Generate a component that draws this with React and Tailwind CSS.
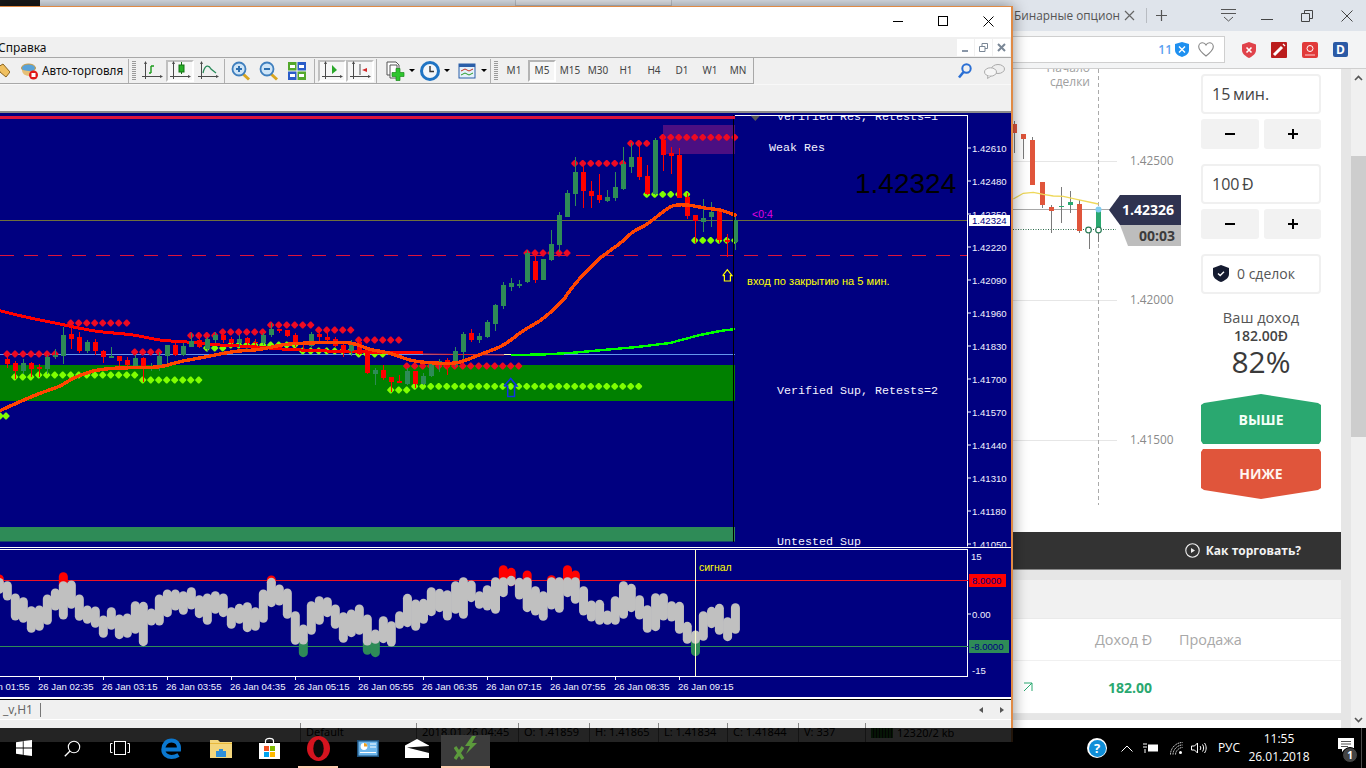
import React from "react";

const SANS = "'Liberation Sans', Arial, sans-serif";
const MONO = "'Liberation Mono', monospace";
const OPEN = "'Open Sans', sans-serif";

// candle rows: [zoomX, colour, bodyTop, bodyBottom, wickTop, wickBottom]
const c7 = [
  [22,"r",178,192,170,205],[46,"r",190,212,182,238],[70,"g",190,212,178,222],[94,"r",190,208,185,230],[118,"r",202,207,192,232],
  [142,"g",172,207,165,222],[166,"g",165,172,148,178],[190,"g",105,168,80,192],[214,"r",102,117,82,147],[238,"r",112,152,96,158],
  [262,"g",127,153,120,158],[286,"r",127,153,118,166],[310,"r",153,172,150,190],[334,"g",168,173,142,174],[358,"r",168,183,168,200],
  [382,"r",180,195,172,208],[406,"g",175,200,165,205],[430,"r",175,205,170,245],[454,"g",201,203,190,212],[478,"g",168,203,155,214],
  [502,"g",136,168,135,190],[526,"r",136,165,130,168],[550,"g",138,165,128,168],[574,"g",123,140,100,142],[598,"r",120,140,100,145],
  [622,"g",118,148,110,155],[646,"g",106,120,96,130],[670,"r",105,120,100,128],[694,"r",118,130,112,134],[718,"g",118,130,105,140],
  [742,"r",114,130,110,136],[766,"r",125,128,118,140],[790,"g",106,130,98,135],[814,"g",87,105,70,110],[838,"r",86,92,86,100],
  [862,"r",90,107,90,110],[886,"r",106,135,100,142],[910,"r",130,135,124,155],[934,"g",102,137,95,140],[958,"r",102,111,95,130],
  [982,"r",111,120,90,125],[1006,"r",118,137,110,140],[1030,"r",135,152,125,170],
];
const c8 = [
  [4,"g",126,152,120,168],[28,"r",125,162,115,165],[52,"r",155,220,150,222],[76,"g",210,222,205,255],[100,"r",210,233,195,240],
  [124,"r",232,245,232,275],[148,"r",243,248,225,250],[172,"g",212,252,205,255],[196,"r",214,252,212,265],[220,"g",228,252,218,255],
  [244,"g",190,228,185,232],[268,"g",184,195,178,215],[292,"r",180,200,175,225],[316,"g",153,195,140,200],[340,"g",102,155,95,190],
  [364,"r",98,120,88,126],[388,"g",108,120,100,130],[412,"g",66,110,60,115],[436,"g",15,72,12,92],[460,"g",-45,18,-55,26],
  [484,"g",-50,-38,-65,-28],[508,"g",-47,-41,-60,-36],[532,"g",-141,-54,-150,-51],[556,"r",-117,-60,-135,-50],
];
const c9 = [
  [10,"g",432,495,432,495],[34,"g",387,435,345,437],[58,"g",300,390,292,410],[82,"g",235,305,225,305],[106,"g",170,238,125,272],
  [130,"r",170,228,152,278],[154,"r",228,243,198,278],[178,"r",240,255,178,265],[202,"g",246,258,225,260],[226,"g",216,248,172,258],
  [250,"g",146,222,97,225],[274,"g",126,156,85,174],[298,"r",125,186,90,196],[322,"r",183,238,150,240],[346,"g",75,236,70,240],
  [370,"r",75,120,60,168],[394,"r",114,122,95,176],[418,"r",120,248,100,250],[442,"r",245,302,235,312],[466,"r",300,317,300,385],
  [490,"g",310,320,252,350],[514,"g",292,305,262,335],[538,"r",285,375,282,385],[562,"r",375,380,357,425],[586,"g",316,380,305,405],
];
const candles = [
  ...c7.map((c) => [c[0] / 3, c[1], 300 + c[2] / 3, 300 + c[3] / 3, 300 + c[4] / 3, 300 + c[5] / 3]),
  ...c8.map((c) => [350 + c[0] / 3, c[1], 300 + c[2] / 3, 300 + c[3] / 3, 300 + c[4] / 3, 300 + c[5] / 3]),
  ...c9.map((c) => [540 + c[0] / 3, c[1], 115 + c[2] / 3, 115 + c[3] / 3, 115 + c[4] / 3, 115 + c[5] / 3]),
];

const range = (from, to, step = 8) => {
  const out = [];
  for (let x = from; x <= to + 0.1; x += step) out.push(x);
  return out;
};
const redDiamonds = [
  ...range(70.7, 126.7).map((x) => [x, 323]),
  ...range(7, 55).map((x) => [x, 354]),
  ...range(134.7, 158.7).map((x) => [x, 352]),
  ...range(190.7, 214.7).map((x) => [x, 335.5]),
  ...range(222.7, 262.7).map((x) => [x, 332]),
  ...range(270.7, 310.7).map((x) => [x, 325]),
  ...range(318.7, 350.7).map((x) => [x, 330]),
  ...range(358.7, 398.7).map((x) => [x, 340]),
  ...range(406.7, 518.7).map((x) => [x, 366]),
  ...range(527, 567).map((x) => [x, 253]),
  ...range(574.7, 622.7).map((x) => [x, 163.3]),
  ...range(630.7, 646.7).map((x) => [x, 143.3]),
  ...range(662.7, 734.7).map((x) => [x, 137.3]),
];
const limeDiamonds = [
  ...range(14.7, 30.7).map((x) => [x, 377]),
  ...range(38.7, 134.7).map((x) => [x, 375]),
  ...range(142.7, 198.7).map((x) => [x, 380]),
  ...range(206.7, 222.7).map((x) => [x, 348]),
  ...range(230.7, 294.7).map((x) => [x, 345]),
  ...range(302.7, 350.7).map((x) => [x, 351]),
  ...range(358.7, 382.7).map((x) => [x, 354]),
  ...range(390.7, 406.7).map((x) => [x, 390]),
  ...range(414.7, 638.7).map((x) => [x, 386.3]),
  ...range(646.7, 686.7).map((x) => [x, 194.3]),
  ...range(694.7, 734.7).map((x) => [x, 240.3]),
  [0, 416], [6, 416],
];
const gem = (x, y) => `${x - 3.4},${y - 0.6} ${x - 0.6},${y - 3.4} ${x + 0.6},${y - 3.4} ${x + 3.4},${y - 0.6} ${x + 3.4},${y + 0.6} ${x + 0.6},${y + 3.4} ${x - 0.6},${y + 3.4} ${x - 3.4},${y + 0.6}`;

const smooth = (p) => {
  let d = `M${p[0][0].toFixed(1)} ${p[0][1].toFixed(1)}`;
  for (let i = 0; i < p.length - 1; i++) {
    const a = p[Math.max(i - 1, 0)];
    const b = p[i];
    const c = p[i + 1];
    const e = p[Math.min(i + 2, p.length - 1)];
    d += ` C${(b[0] + (c[0] - a[0]) / 6).toFixed(1)} ${(b[1] + (c[1] - a[1]) / 6).toFixed(1)} ${(c[0] - (e[0] - b[0]) / 6).toFixed(1)} ${(c[1] - (e[1] - b[1]) / 6).toFixed(1)} ${c[0].toFixed(1)} ${c[1].toFixed(1)}`;
  }
  return d;
};
const orange = smooth([
  ...[[0,332],[60,305],[120,280],[180,258],[220,235],[280,213],[340,205],[400,203],[480,200],[540,185],[620,170],[700,155],[780,148],[860,133],[960,128],[1050,129]].map(([x, y]) => [x / 3, 300 + y / 3]),
  ...[[60,148],[120,160],[180,180],[240,188],[320,188],[400,160],[460,135],[520,92],[580,55],[640,0]].map(([x, y]) => [350 + x / 3, 300 + y / 3]),
  ...[[80,540],[120,490],[180,430],[240,385],[280,350],[320,328],[370,290],[400,272],[440,270],[500,280],[540,285],[590,302]].map(([x, y]) => [540 + x / 3, 115 + y / 3]),
]);
const redMa = smooth([[0,32],[60,47],[120,60],[180,72],[240,85],[300,95],[400,105],[480,120],[560,126],[660,135],[760,140],[860,148],[1050,155],[1270,158]].map(([x, y]) => [x / 3, 300 + y / 3]));

// oscillator: [zoom x, top, bottom, redTop?, greenBottom?]
const o10 = [
  [-2,100,145,90],[22,110,165],[46,147,225],[70,158,232],[94,185,262],[118,183,256],[142,150,238],[166,132,195],[190,110,222,83],
  [214,108,190],[238,150,226],[262,183,235],[286,186,247],[310,213,277],[334,188,253],[358,210,281],[382,207,277],[406,170,265],
  [430,172,302],[454,192,240],[478,150,240],[502,135,215],[526,135,195],[550,140,208],[574,128,192],[598,152,218],[622,147,238],
  [646,140,205],[670,147,215],[694,188,250],[718,178,235],[742,173,260],[766,188,256],[790,135,232],[814,100,185,93],[838,120,180],
  [862,132,220],[886,200,298],[910,240,297,null,335],[934,170,268],[958,155,238],[982,158,215],[1006,180,250],[1030,203,292],
  [1054,195,275],[1078,180,268],[1102,210,300,null,328],[1126,255,295,null,335],[1150,215,293],[1174,230,303],
];
const o11 = [
  [-1,200,250],[19,148,245],[40,165,256],[60,163,235],[80,128,212],[101,133,200],[121,137,225],[142,110,205],[162,98,220],[182,108,170],
  [203,140,190],[223,122,195],[244,98,205],[264,98,155,62],[284,98,118,70],[305,100,162],[325,98,200,78],[346,125,210],[366,140,226],
  [387,98,192,92],[407,98,202],[428,98,155,62],[448,98,175,78],[469,125,210],[489,168,228],[510,166,238],[530,198,238],[550,155,238],
  [571,110,220],[591,118,200],[612,152,222],[632,182,262],[653,146,257],[673,146,225],[694,170,228],[714,172,265],[734,232,295],
  [755,258,295,null,332],[775,200,286],[796,187,248],[816,178,268],[837,218,287],[857,176,265],
];
const osc = [
  ...o10.map(([z, t, b, r, g]) => [z / 3, t, b, r, g]),
  ...o11.map(([z, t, b, r, g]) => [400 + z / 2.555, t, b, r, g]),
];
const oy = (v) => 545 + v / 3;

const priceLabels = [["1.42610",148],["1.42480",181],["1.42350",214],["1.42220",247],["1.42090",280],["1.41960",313],["1.41830",346],["1.41700",379],["1.41570",412],["1.41440",445],["1.41310",478],["1.41180",511],["1.41050",544]];
const times = ["01:55","02:35","03:15","03:55","04:35","05:15","05:55","06:35","07:15","07:55","08:35","09:15"];

function Chart() {
  return (
    <svg viewBox="0 113 1011 584" width="1011" height="584" className="block shrink-0 bg-[#000080]">
      <rect x="0" y="365" width="735" height="36" fill="#008000" />
      <rect x="0" y="527" width="735" height="14.5" fill="#2e8b57" />
      <rect x="663" y="125" width="72" height="29" fill="#4b0f82" />
      <line x1="0" x2="968" y1="220.5" y2="220.5" stroke="#6f6f3c" />
      <line x1="0" x2="968" y1="255.5" y2="255.5" stroke="#dc143c" strokeDasharray="14 10" strokeWidth="1" />
      <line x1="0" x2="735" y1="354.5" y2="354.5" stroke="#6495ed" />
      {redDiamonds.map(([x, y], i) => (
        <polygon key={i} points={gem(x, y)} fill="#ee0a22" />
      ))}
      {limeDiamonds.map(([x, y], i) => (
        <polygon key={i} points={gem(x, y)} fill="#7fff00" />
      ))}
      <path d={redMa} fill="none" stroke="#ff0000" strokeWidth="3" shapeRendering="crispEdges" />
      <line x1="423" x2="504" y1="354" y2="355" stroke="#e82020" strokeWidth="1" />
      <line x1="504" x2="511" y1="354.5" y2="354.5" stroke="#ffffb0" />
      <polyline points="511,355 543,354.5 570,353 603,350 637,347 670,343 700,335 720,331 735,329" fill="none" stroke="#00ff00" strokeWidth="2.4" shapeRendering="crispEdges" />
      <g shapeRendering="crispEdges">
        {candles.map(([x, col, t, b, wt, wb], i) => {
          const cx = Math.floor(x);
          const c = col === "r" ? "#ff0000" : "#2e8b57";
          return (
            <g key={i}>
              <rect x={cx} y={wt} width="1" height={wb - wt} fill={c} />
              <rect x={cx - 2} y={t} width="5" height={Math.max(b - t, 1)} fill={c} />
            </g>
          );
        })}
      </g>
      <path d={orange} fill="none" stroke="#ff4500" strokeWidth="3.4" strokeLinejoin="round" shapeRendering="crispEdges" />
      <polyline points="504,386 510.7,378.5 517,386 514.5,386 514.5,396.5 507.7,396.5 507.7,386 504,386" fill="none" stroke="#1030e8" strokeWidth="1.5" />
      <polyline points="722.7,275.7 727.3,269.7 732,275.7 730.4,275.7 730.4,281 724.4,281 724.4,275.7 722.7,275.7" fill="none" stroke="#ffff00" strokeWidth="1.2" />
      <line x1="733.5" x2="733.5" y1="113" y2="542" stroke="#000000" />

      <text x="777" y="120" fontFamily={MONO} fontSize="11.67" fill="#f4f4ff">Verified Res, Retests=1</text>
      <rect x="0" y="113" width="1011" height="2" fill="#000080" />
      <rect x="0" y="116" width="735" height="3" fill="#dc143c" />
      <line x1="735" x2="968" y1="115.5" y2="115.5" stroke="#ffffff" />
      <polygon points="750.7,115.7 760,115.7 755.3,121" fill="#555555" />
      <text x="769" y="151" fontFamily={MONO} fontSize="11.67" fill="#f4f4ff">Weak Res</text>
      <text x="777" y="394" fontFamily={MONO} fontSize="11.67" fill="#f4f4ff">Verified Sup, Retests=2</text>
      <text x="777" y="545" fontFamily={MONO} fontSize="11.67" fill="#f4f4ff">Untested Sup</text>
      <text x="855" y="192.5" fontFamily={SANS} fontSize="28" fill="#000000">1.42324</text>
      <text x="752" y="217.5" fontFamily={SANS} fontSize="10.5" fill="#e000e0">&lt;0:4</text>
      <text x="747" y="284.5" fontFamily={SANS} fontSize="11.1" fill="#ffff00">вход по закрытию на 5 мин.</text>

      <line x1="967.5" x2="967.5" y1="115" y2="677" stroke="#ffffff" />
      {priceLabels.map(([t, y]) => (
        <g key={t}>
          <line x1="968" x2="971" y1={y} y2={y} stroke="#ffffff" />
          <text x="972" y={y + 3.5} fontFamily={SANS} fontSize="9.6" fill="#f2f2ff">{t}</text>
        </g>
      ))}
      <rect x="969" y="215" width="41" height="11" fill="#ffffff" />
      <text x="972" y="224" fontFamily={SANS} fontSize="9.6" fill="#000080">1.42324</text>

      <rect x="0" y="546.5" width="1011" height="3" fill="#000080" />
      <line x1="0" x2="1011" y1="547.5" y2="547.5" stroke="#ffffff" />
      <line x1="0" x2="968" y1="549.5" y2="549.5" stroke="#ffffff" />
      <line x1="0" x2="968" y1="580.5" y2="580.5" stroke="#ee1122" />
      <line x1="0" x2="968" y1="646.5" y2="646.5" stroke="#2e8b57" />
      {osc.map(([x, t, b, r, g], i) => (
        <g key={i}>
          {r ? <line x1={x} x2={x} y1={oy(r) + 4} y2={oy(t) + 4} stroke="#ff0000" strokeWidth="9" strokeLinecap="round" /> : null}
          {g ? <line x1={x} x2={x} y1={oy(b) - 4} y2={oy(g) - 4} stroke="#2e8b57" strokeWidth="9" strokeLinecap="round" /> : null}
        </g>
      ))}
      {osc.map(([x, t, b], i) => (
        <line key={i} x1={x} x2={x} y1={oy(t) + 4} y2={oy(b) - 4} stroke="#c0c0c0" strokeWidth="9" strokeLinecap="round" />
      ))}
      <line x1="695.5" x2="695.5" y1="550" y2="676" stroke="#ffffc8" />
      <text x="699" y="571" fontFamily={SANS} fontSize="10.5" fill="#ffff00">сигнал</text>
      <line x1="0" x2="968" y1="676.5" y2="676.5" stroke="#ffffff" />
      <text x="971" y="560" fontFamily={SANS} fontSize="9.6" fill="#f2f2ff">15</text>
      <text x="972" y="617.5" fontFamily={SANS} fontSize="9.6" fill="#f2f2ff">0.00</text>
      <text x="972" y="673.5" fontFamily={SANS} fontSize="9.6" fill="#f2f2ff">-15</text>
      <line x1="968" x2="971" y1="614" y2="614" stroke="#ffffff" />
      <rect x="969" y="574" width="37" height="13" fill="#ff0000" />
      <text x="972" y="584" fontFamily={SANS} fontSize="9.6" fill="#000080">8.0000</text>
      <rect x="969" y="640" width="40" height="13" fill="#2e8b57" />
      <text x="971" y="650" fontFamily={SANS} fontSize="9.6" fill="#000080">-8.0000</text>
      {times.map((t, i) => (
        <g key={t}>
          <line x1={39.5 + 64 * (i - 1)} x2={39.5 + 64 * (i - 1)} y1="677" y2="680" stroke="#ffffff" />
          <text x={38 + 64 * (i - 1)} y="689.5" fontFamily={SANS} fontSize="9.6" fill="#f2f2ff">26 Jan {t}</text>
        </g>
      ))}
    </svg>
  );
}

const Axis = () => (
  <g stroke="#4a4a4a" strokeWidth="1" fill="#4a4a4a">
    <line x1="4.5" x2="4.5" y1="1" y2="18" />
    <line x1="1" x2="19" y1="15.5" y2="15.5" />
    <polygon points="19,14 22,15.5 19,17" stroke="none" />
    <polygon points="3,3 4.5,0 6,3" stroke="none" />
  </g>
);
const Ico = ({ children, w = 22, h = 20 }) => (
  <svg width={w} height={h} viewBox={`0 0 ${w} ${h}`} className="block shrink-0">{children}</svg>
);
const Slot = ({ children, active, w = "w-[28px]" }) => (
  <div className={`${w} h-[22px] flex items-center justify-center shrink-0 ${active ? "border-2 border-[#c0c0c0] border-b-white border-r-white bg-[#f6f6f6]" : ""}`}>{children}</div>
);
const Sep = ({ w = "w-[5px]" }) => (
  <div className={`${w} h-[24px] flex justify-center shrink-0`}><div className="w-px h-full bg-[#b0b0b0]" /></div>
);
const Caret = () => <div className="w-0 h-0 border-x-[3px] border-x-transparent border-t-[3px] border-t-black shrink-0" />;
const Grip = () => (
  <div className="w-[4px] h-[20px] ml-[3px] mr-[2px] shrink-0 bg-[repeating-linear-gradient(to_bottom,#9a9a9a_0,#9a9a9a_1px,transparent_1px,transparent_2px)]" />
);

const Magnifier = ({ minus }) => (
  <Ico w={20} h={20}>
    <line x1="11" y1="12" x2="18" y2="18.5" stroke="#d9a520" strokeWidth="3" />
    <circle cx="8" cy="8" r="6.5" fill="#cfe5f7" stroke="#3f7fbe" strokeWidth="1.8" />
    <line x1="5" x2="11" y1="8" y2="8" stroke="#2d6fb0" strokeWidth="2" />
    {minus ? null : <line x1="8" x2="8" y1="5" y2="11" stroke="#2d6fb0" strokeWidth="2" />}
  </Ico>
);

function MtToolbar() {
  return (
    <div className="flex items-center h-[26px] border-b border-[#a8a8a8] w-[754px] border-r shrink-0">
      <div className="w-[10px] shrink-0 overflow-hidden">
        <svg width="10" height="16" viewBox="0 0 10 16"><polygon points="-2,4 3,1 10,9 6,14 0,9" fill="#f0c060" stroke="#8a6420" /></svg>
      </div>
      <div className="ml-[11px] shrink-0">
        <Ico w={17} h={18}>
          <ellipse cx="7.5" cy="6" rx="7" ry="4" fill="#5aa3d8" stroke="#c89a40" />
          <path d="M1 8 C1 15 12 16 14 10 Z" fill="#e5c078" />
          <circle cx="12.5" cy="13" r="4.5" fill="#e01818" />
          <rect x="10.5" y="11" width="4" height="4" fill="#ffffff" />
        </Ico>
      </div>
      <span className="ml-[4px] w-[85px] pt-[1px] text-[11.7px] leading-none text-[#111] shrink-0 [font-family:'Noto_Sans',sans-serif]">Авто-торговля</span>
      <Sep w="w-[2px]" />
      <Grip />
      <div className="w-[0px]" />
      <Slot>
        <Ico><Axis /><path d="M10 12 V5 M10 12 H8 M10 5 H13" stroke="#1a9a1a" strokeWidth="1.4" fill="none" /></Ico>
      </Slot>
      <Slot active>
        <Ico><Axis /><line x1="12.5" x2="12.5" y1="1" y2="13" stroke="#127012" /><rect x="10" y="4" width="5" height="7" fill="#26b026" stroke="#127012" /></Ico>
      </Slot>
      <Slot>
        <Ico><Axis /><path d="M6 12 C8 3 12 4 14 8 L19 12" stroke="#2a8a5a" strokeWidth="1.3" fill="none" /></Ico>
      </Slot>
      <Sep />
      <Slot><Magnifier /></Slot>
      <Slot><Magnifier minus /></Slot>
      <Slot>
        <Ico w={18} h={18}>
          <rect x="0" y="0" width="8.5" height="8.5" fill="#53a82c" />
          <rect x="9.5" y="0" width="8.5" height="8.5" fill="#2a5cc8" />
          <rect x="0" y="9.5" width="8.5" height="8.5" fill="#2a5cc8" />
          <rect x="9.5" y="9.5" width="8.5" height="8.5" fill="#53a82c" />
          <rect x="2" y="3" width="5" height="3" fill="#fff" />
          <rect x="11" y="3" width="5" height="3" fill="#fff" />
          <rect x="2" y="12" width="5" height="3" fill="#fff" />
          <rect x="11" y="12" width="5" height="3" fill="#fff" />
        </Ico>
      </Slot>
      <Sep w="w-[7px]" />
      <Slot active>
        <Ico><Axis /><polygon points="11,4 16,9 11,13" fill="#2aa82a" /></Ico>
      </Slot>
      <Slot active>
        <Ico><Axis /><line x1="11" x2="11" y1="3" y2="14" stroke="#555" /><polygon points="18,7 13,9 18,11" fill="#d02828" /></Ico>
      </Slot>
      <Sep />
      <div className="w-[37px] flex items-center shrink-0 pl-[6px] gap-[4px]">
        <Ico w={20} h={20}>
          <path d="M2 1 H11 L14 4 V14 H2 Z" fill="#fff" stroke="#555" />
          <path d="M5 4 H12 V17 H5 Z" fill="#fff" stroke="#555" />
          <path d="M11 7.5 H15 V11.5 H19 V15.5 H15 V19.5 H11 V15.5 H7 V11.5 H11 Z" fill="#2ec52e" stroke="#1a8a1a" strokeWidth="0.7" />
        </Ico>
        <Caret />
      </div>
      <div className="w-[37px] flex items-center shrink-0 pl-[4px] gap-[4px]">
        <Ico w={20} h={20}>
          <circle cx="10" cy="10" r="8.5" fill="#f2f6fa" stroke="#1f74c4" strokeWidth="3" />
          <path d="M10 5 V10.5 H14" stroke="#333" strokeWidth="1.4" fill="none" />
        </Ico>
        <Caret />
      </div>
      <div className="w-[36px] flex items-center shrink-0 pl-[4px] gap-[4px]">
        <Ico w={20} h={18}>
          <rect x="2" y="2" width="16" height="14" fill="#e4f0fa" stroke="#2a5ea8" />
          <rect x="2" y="2" width="16" height="3" fill="#2a5ea8" />
          <path d="M4 9 L8 7 L12 9 L16 7" stroke="#c03020" fill="none" />
          <path d="M4 13 L8 11 L12 13 L16 11" stroke="#2a9a2a" fill="none" />
        </Ico>
        <Caret />
      </div>
      <Sep w="w-[2px]" />
      <Grip />
      {["M1", "M5", "M15", "M30", "H1", "H4", "D1", "W1", "MN"].map((m) => (
        <div key={m} className={`w-[28px] h-[22px] flex items-center justify-center shrink-0 text-[10px] text-[#444] [font-family:'Noto_Sans',sans-serif] ${m === "M5" ? "border-2 border-[#b4b4b4] border-b-white border-r-white bg-[#f6f6f6]" : ""}`}>{m}</div>
      ))}
    </div>
  );
}

function MtWindow() {
  return (
    <div className="absolute left-0 top-[6px] w-[1013px] h-[736px] flex flex-col bg-[#f0f0f0] border-t border-r-2 border-[#e08a45] shadow-[0_0_14px_rgba(0,0,0,0.45)]">
      <div className="h-[30px] pb-[2px] bg-white flex items-center justify-end shrink-0">
        <div className="w-[45px] flex justify-center"><div className="w-[10px] h-px bg-black" /></div>
        <div className="w-[45px] flex justify-center"><div className="w-[10px] h-[10px] border border-black" /></div>
        <div className="w-[46px] flex justify-center">
          <svg width="11" height="11" viewBox="0 0 11 11"><path d="M0.5 0.5 L10.5 10.5 M10.5 0.5 L0.5 10.5" stroke="#000" /></svg>
        </div>
      </div>
      <div className="h-[20px] flex items-center justify-between shrink-0 border-b border-[#a8a8a8] box-content">
        <span className="-ml-[2px] pt-[2px] text-[12px] leading-none text-[#111] [font-family:'Noto_Sans',sans-serif]">Справка</span>
        <div className="flex gap-px pr-px">
          {["min", "res", "cls"].map((b) => (
            <div key={b} className="w-[17px] h-[17px] bg-white flex items-center justify-center">
              <svg width="9" height="9" viewBox="0 0 9 9">
                {b === "min" ? <rect x="1" y="7" width="6" height="2" fill="#8a97a8" /> : null}
                {b === "res" ? <path d="M0.5 3.5 H6 V8.5 H0.5 Z M3 3 V0.5 H8.5 V5.5 H6" fill="none" stroke="#7a8796" /> : null}
                {b === "cls" ? <path d="M1 1 L8 8 M8 1 L1 8" stroke="#7a8796" strokeWidth="2" /> : null}
              </svg>
            </div>
          ))}
        </div>
      </div>
      <div className="h-[26px] relative flex items-center justify-between shrink-0 border-b border-[#f8f8f8] box-content">
        <MtToolbar />
        <div className="flex items-center gap-[12px] pr-[6px]">
          <svg width="14" height="16" viewBox="0 0 14 16">
            <circle cx="8.5" cy="5.5" r="4.2" fill="none" stroke="#2a6fd4" strokeWidth="2" />
            <line x1="5.5" y1="9" x2="1" y2="14.5" stroke="#2a6fd4" strokeWidth="2.6" />
          </svg>
          <svg width="21" height="15" viewBox="0 0 21 15">
            <ellipse cx="14" cy="5" rx="6.5" ry="4.5" fill="#eee" stroke="#aaa" />
            <ellipse cx="6.5" cy="8" rx="6" ry="4.2" fill="#f6f6f6" stroke="#aaa" />
            <path d="M4 11.5 L3.5 14.5 L7 12" fill="#f6f6f6" stroke="#aaa" />
          </svg>
        </div>
      </div>
      <div className="h-[26px] shrink-0" />
      <div className="h-[2px] bg-[#8c8c8c] shrink-0" />
      <Chart />
      <div className="h-[2px] bg-white shrink-0" />
      <div className="h-px bg-black shrink-0" />
      <div className="h-[19px] flex items-center shrink-0 relative">
        <span className="w-[40px] pl-[3px] text-[12px] leading-none text-[#666] [font-family:'Noto_Sans',sans-serif]">_v,H1</span>
        <div className="w-px h-[14px] bg-[#777]" />
        <div className="ml-auto flex items-center gap-[17px] pr-[7px]">
          <div className="w-0 h-0 border-y-[3px] border-y-transparent border-r-[4px] border-r-[#555]" />
          <div className="w-0 h-0 border-y-[3px] border-y-transparent border-l-[4px] border-l-[#555]" />
        </div>
      </div>
      <div className="h-px bg-white shrink-0" />
      <div className="flex-1 flex pl-[300px] pt-[3px] text-[11px] leading-[18px] text-black [font-family:'Noto_Sans',sans-serif] whitespace-nowrap">
        {[["Default", 116], ["2018.01.26 04:45", 102], ["O: 1.41859", 71], ["H: 1.41865", 69], ["L: 1.41834", 69], ["C: 1.41844", 71], ["V: 337", 67]].map(([t, w]) => (
          <div key={t} style={{ width: w }} className="pl-[5px] border-l border-[#888]">{t}</div>
        ))}
        <div className="w-[97px] pl-[5px] border-l border-[#888] flex items-center gap-[4px]">
          <div className="w-[22px] h-[10px] bg-[repeating-linear-gradient(to_right,#2a8a2a_0,#2a8a2a_2px,#1c1c1c_2px,#1c1c1c_3px)]" />
          <span>12320/2 kb</span>
        </div>
      </div>
    </div>
  );
}

function SmallChart() {
  const c = [
    [12,"#e0553b",372,400,362,460],[40,"#e0553b",402,418,402,476],[67,"#e0553b",420,554,410,554],[97,"#e0553b",546,614,546,624],
    [124,"#e0553b",622,632,615,698],[154,"#2aa870",618,620,562,668],[181,"#2aa870",606,614,574,638],[208,"#e0553b",612,692,600,698],
    [238,"#2aa870",688,690,690,748],[265,"#2aa870",630,690,690,725],
  ];
  return (
    <svg viewBox="1013 69 188 463" width="188" height="463" className="block shrink-0">
      {[["1.42500",161],["1.42000",300],["1.41500",440]].map(([t, y]) => (
        <g key={t}>
          <line x1="1013" x2="1117" y1={y + 0.5} y2={y + 0.5} stroke="#e6e6e6" />
          <text x="1130" y={y + 4} fontFamily={OPEN} fontSize="11.8" fill="#8a8a8a">{t}</text>
        </g>
      ))}
      <line x1="1098.5" x2="1098.5" y1="69" y2="505" stroke="#aaaaaa" strokeDasharray="4 3" />
      <text x="1090" y="72" textAnchor="end" fontFamily={OPEN} fontSize="12" fill="#a0a0a0">Начало</text>
      <text x="1090" y="86" textAnchor="end" fontFamily={OPEN} fontSize="12" fill="#a0a0a0">сделки</text>
      <line x1="1013" x2="1110" y1="209.5" y2="209.5" stroke="#a8a8a8" />
      <line x1="1013" x2="1116" y1="229.5" y2="229.5" stroke="#2a6a4a" strokeDasharray="1 1.5" />
      <g shapeRendering="crispEdges">
        {c.map(([z, col, t, b, wt, wb]) => {
          const x = Math.floor(1010 + z / 3);
          return (
            <g key={z}>
              <rect x={x} y={wt / 3} width="1" height={(wb - wt) / 3} fill="#7a7a7a" />
              <rect x={x - 2} y={t / 3} width="5" height={(b - t) / 3} fill={col} />
            </g>
          );
        })}
      </g>
      <polyline points="1013.3,199 1023.3,193.3 1033.3,192.3 1043.3,194.3 1053.3,196 1063.3,196.3 1076.7,199.3 1098.3,204" fill="none" stroke="#eed85a" strokeWidth="1.3" />
      <circle cx="1098.5" cy="209.5" r="3" fill="#7fcdf0" />
      <circle cx="1088.5" cy="230" r="2.8" fill="#fff" stroke="#2a7a55" strokeWidth="1.2" />
      <circle cx="1098.5" cy="230" r="2.8" fill="#fff" stroke="#2a7a55" strokeWidth="1.2" />
      <polygon points="1120,195 1181,195 1181,225 1120,225 1109,210" fill="#2f3350" />
      <polygon points="1120,225 1181,225 1181,246 1128,246" fill="#bdbdbd" />
      <text x="1122" y="215" fontFamily={OPEN} fontSize="14" fontWeight="700" fill="#ffffff">1.42326</text>
      <text x="1139" y="240.5" fontFamily={OPEN} fontSize="14" fontWeight="700" fill="#3c3c3c">00:03</text>
    </svg>
  );
}

const StepBtns = () => (
  <div className="flex justify-between mt-[5px]">
    <div className="w-[58px] h-[30px] rounded-[3px] bg-[#f2f2f2] flex items-center justify-center">
      <div className="w-[10px] h-[2px] bg-black" />
    </div>
    <div className="w-[57px] h-[30px] rounded-[3px] bg-[#f2f2f2] flex items-center justify-center relative">
      <div className="w-[10px] h-[2px] bg-black" />
      <div className="w-[2px] h-[10px] bg-black absolute" />
    </div>
  </div>
);

function Sidebar() {
  return (
    <div className="w-[120px] shrink-0 pt-[5px] [font-family:'Open_Sans',sans-serif]">
      <div className="h-[40px] border-2 border-[#f0f0f0] rounded-[4px] flex items-center pl-[9px] text-[16px] text-[#444]">15&#8201;мин.</div>
      <StepBtns />
      <div className="h-[40px] mt-[15px] border-2 border-[#f0f0f0] rounded-[4px] flex items-center pl-[9px] text-[16px] text-[#444]">100&#8201;Ð</div>
      <StepBtns />
      <div className="h-[40px] mt-[15px] pb-[2px] border-2 border-[#f0f0f0] rounded-[4px] flex items-center pl-[10px] text-[14px] text-[#555] gap-[8px]">
        <svg width="16" height="17" viewBox="0 0 16 17">
          <path d="M8 0 L16 3 V9 C16 13 12 15.5 8 17 C4 15.5 0 13 0 9 V3 Z" fill="#151b30" />
          <path d="M5 8.5 L7.2 10.5 L11 6.8" stroke="#fff" strokeWidth="1.4" fill="none" />
        </svg>
        <span>0 сделок</span>
      </div>
      <div className="mt-[14px] text-center text-[14.6px] leading-[19px] text-[#555]">Ваш доход</div>
      <div className="text-center text-[14px] leading-[17px] font-semibold text-[#444]">182.00Ð</div>
      <div className="text-center text-[30px] leading-[36px] text-[#3a3a3a]">82%</div>
      <div className="mt-[14px] h-[50px] bg-[#2aa870] flex items-center justify-center text-[14px] font-bold text-[#f4fff8] [clip-path:polygon(0_11px,3px_9px,60px_0,117px_9px,120px_11px,120px_47px,118px_50px,2px_50px,0_47px)]">ВЫШЕ</div>
      <div className="mt-[5px] h-[50px] pb-[2px] bg-[#e0553b] flex items-center justify-center text-[14px] font-bold text-[#fff4f0] [clip-path:polygon(0_3px,2px_0,118px_0,120px_3px,120px_39px,117px_41px,60px_50px,3px_41px,0_39px)]">НИЖЕ</div>
    </div>
  );
}

function Browser() {
  return (
    <div className="absolute left-0 top-0 w-[1366px] h-[728px] flex flex-col bg-white [font-family:'Open_Sans',sans-serif]">
      <div className="h-[31px] flex shrink-0 bg-[#dfe4eb] relative">
        <div className="w-[40px] h-[6px] bg-[#1a1a1a] shrink-0" />
        <div className="ml-[475px] w-[157px] h-[6px] bg-[#e6e9ee] border-x border-b border-[#c0c4ca] shrink-0" />
        <div className="ml-[342px] w-[108px] h-[31px] flex items-center whitespace-nowrap text-[11.8px] text-[#555] shrink-0">Бинарные опцион</div>
        <div className="ml-[2px] w-[12px] h-[31px] flex items-center">
          <svg width="11" height="11" viewBox="0 0 11 11"><path d="M1 1 L10 10 M10 1 L1 10" stroke="#666" strokeWidth="1.2" /></svg>
        </div>
        <div className="ml-[10px] w-px h-[15px] mt-[8px] bg-[#b8bcc2]" />
        <div className="ml-[9px] h-[31px] flex items-center">
          <svg width="11" height="11" viewBox="0 0 11 11"><path d="M5.5 0 V11 M0 5.5 H11" stroke="#555" strokeWidth="1.2" /></svg>
        </div>
        <div className="ml-[54px] h-[31px] flex items-center">
          <svg width="15" height="13" viewBox="0 0 15 13"><path d="M0 0.5 H15 M0 4.5 H15 M3 8 L7.5 12 L12 8" stroke="#555" fill="none" /></svg>
        </div>
        <div className="ml-[25px] h-[31px] flex items-center pt-[8px]"><div className="w-[12px] h-px bg-[#444]" /></div>
        <div className="ml-[28px] h-[31px] flex items-center">
          <svg width="12" height="12" viewBox="0 0 12 12"><path d="M0.5 3.5 H8.5 V11.5 H0.5 Z M3.5 3 V0.5 H11.5 V8.5 H9" stroke="#444" fill="none" /></svg>
        </div>
        <div className="ml-[28px] h-[31px] flex items-center">
          <svg width="12" height="12" viewBox="0 0 12 12"><path d="M0.5 0.5 L11.5 11.5 M11.5 0.5 L0.5 11.5" stroke="#444" /></svg>
        </div>
      </div>
      <div className="h-[38px] shrink-0 bg-[#f3f4f5] border-b border-[#cfcfcf] flex items-center">
        <div className="w-[1225px] h-[27px] bg-white border border-[#cfcfcf] flex items-center justify-end pr-[10px]">
          <span className="text-[12px] text-[#5a9ff0] font-semibold mr-[3px]">11</span>
          <svg width="14" height="15" viewBox="0 0 14 15" className="mr-[9px]">
            <path d="M7 0 L14 2 V8 C14 12 10 14 7 15 C4 14 0 12 0 8 V2 Z" fill="#1e90f0" />
            <path d="M4 4.5 L10 10.5 M10 4.5 L4 10.5" stroke="#fff" strokeWidth="1.4" />
          </svg>
          <svg width="16" height="15" viewBox="0 0 16 15">
            <path d="M8 14 C3 10 0.7 7.5 0.7 4.7 C0.7 2.3 2.5 0.7 4.5 0.7 C6 0.7 7.3 1.5 8 3 C8.7 1.5 10 0.7 11.5 0.7 C13.5 0.7 15.3 2.3 15.3 4.7 C15.3 7.5 13 10 8 14 Z" fill="none" stroke="#888" strokeWidth="1.1" />
          </svg>
        </div>
        <div className="ml-[17px] flex items-center gap-[15px]">
          <svg width="14" height="16" viewBox="0 0 14 16">
            <path d="M7 0 L14 2.5 V8 C14 12 10 14.5 7 16 C4 14.5 0 12 0 8 V2.5 Z" fill="#e0424a" />
            <path d="M4.5 5.5 L9.5 10.5 M9.5 5.5 L4.5 10.5" stroke="#fff" strokeWidth="1.6" />
          </svg>
          <svg width="16" height="16" viewBox="0 0 16 16">
            <rect width="16" height="16" rx="1" fill="#bb1d1d" />
            <path d="M3 13 L11 5" stroke="#fff" strokeWidth="3" />
            <path d="M12 2 L14 4" stroke="#fff" strokeWidth="1.2" />
          </svg>
          <svg width="16" height="16" viewBox="0 0 16 16">
            <rect width="16" height="16" rx="2" fill="#e13a3a" />
            <circle cx="8" cy="6.5" r="3" fill="none" stroke="#fff" strokeWidth="1" />
            <path d="M3 13 H13" stroke="#ffcccc" />
          </svg>
          <div className="w-[15px] h-[15px] bg-[#2b5aa5] rounded-[2px] text-[12px] leading-[15px] font-bold text-white text-center">D</div>
        </div>
      </div>
      <div className="flex flex-1 min-h-0">
        <div className="w-[1341px] shrink-0 flex flex-col">
          <div className="h-[463px] flex pl-[1013px]">
            <SmallChart />
            <Sidebar />
          </div>
          <div className="h-[38px] bg-[#333] border-b border-[#888] flex items-center justify-end pr-[40px] gap-[6px]">
            <svg width="15" height="15" viewBox="0 0 15 15">
              <circle cx="7.5" cy="7.5" r="6.7" fill="none" stroke="#eee" strokeWidth="1.1" />
              <polygon points="6,5 10,7.5 6,10" fill="#eee" />
            </svg>
            <span className="text-[12px] font-bold text-[#f2f2f2]">Как торговать?</span>
          </div>
          <div className="h-[10px] bg-[#e6e6e6]" />
          <div className="h-[38px] bg-[#f1f1f1]" />
          <div className="h-[43px] border-t border-[#eaeaea] border-b border-b-[#f0f0f0] flex items-center pl-[1095px] text-[14.4px] text-[#a8a8a8]">
            <span className="w-[84px]">Доход Ð</span>
            <span>Продажа</span>
          </div>
          <div className="h-[53px] flex items-center pl-[1023px] border-b border-[#e8e8e8]">
            <svg width="10" height="10" viewBox="0 0 10 10" className="ml-[0px]"><path d="M1 1 H9 V9 M9 1 L1 9" stroke="#2aa870" fill="none" /></svg>
            <span className="ml-[75px] text-[14px] font-bold text-[#2aa870]">182.00</span>
          </div>
          <div className="h-[6px] bg-[#e6e6e6]" />
          <div className="flex-1 bg-white" />
        </div>
        <div className="w-[10px] bg-[#e6e6e6] shrink-0" />
        <div className="w-[15px] bg-[#f0f0f0] shrink-0 flex flex-col items-center">
          <svg width="9" height="6" viewBox="0 0 9 6" className="mt-[6px]"><path d="M1 5 L4.5 1.5 L8 5" stroke="#555" strokeWidth="1.6" fill="none" /></svg>
          <div className="w-full h-[281px] mt-[75px] bg-[#cdcdcd]" />
          <svg width="9" height="6" viewBox="0 0 9 6" className="mt-auto mb-[5px]"><path d="M1 1 L4.5 4.5 L8 1" stroke="#555" strokeWidth="1.6" fill="none" /></svg>
        </div>
      </div>
    </div>
  );
}

const TaskSlot = ({ children, className = "" }) => (
  <div className={`w-[49px] h-[40px] flex items-center justify-center shrink-0 relative ${className}`}>{children}</div>
);

function Taskbar() {
  return (
    <div className="absolute left-0 bottom-0 w-[1366px] h-[40px] bg-black/85 flex items-center text-white [font-family:'Open_Sans',sans-serif]">
      <div className="w-[48px] h-full flex items-center justify-center shrink-0">
        <svg width="16" height="16" viewBox="0 0 16 16">
          <polygon points="0,2.2 6.8,1.2 6.8,7.6 0,7.6" fill="#fff" />
          <polygon points="7.6,1.1 16,0 16,7.6 7.6,7.6" fill="#fff" />
          <polygon points="0,8.4 6.8,8.4 6.8,14.8 0,13.8" fill="#fff" />
          <polygon points="7.6,8.4 16,8.4 16,16 7.6,14.9" fill="#fff" />
        </svg>
      </div>
      <div className="w-[48px] h-full flex items-center justify-center shrink-0">
        <svg width="17" height="17" viewBox="0 0 17 17">
          <circle cx="10" cy="7" r="5.7" fill="none" stroke="#fff" strokeWidth="1.1" />
          <line x1="6" y1="11" x2="0.8" y2="16.2" stroke="#fff" strokeWidth="1.3" />
        </svg>
      </div>
      <div className="w-[48px] h-full flex items-center justify-center shrink-0">
        <svg width="20" height="14" viewBox="0 0 20 14">
          <rect x="4.5" y="0.5" width="11" height="13" fill="none" stroke="#fff" />
          <path d="M2.5 2.5 H0.5 V11.5 H2.5 M17.5 2.5 H19.5 V11.5 H17.5" fill="none" stroke="#fff" />
        </svg>
      </div>
      <div className="w-[3px] shrink-0" />
      <TaskSlot>
        <svg width="21" height="21" viewBox="0 0 21 21">
          <path d="M4 11.5 H18 C18.5 5.5 15 2.5 10.5 2.5 C5.5 2.5 2.3 6.5 2.3 11.5 C2.3 16.5 6.5 19 10.5 19 C13.5 19 15.5 18.2 17.5 17" fill="none" stroke="#0b78d0" strokeWidth="4" />
        </svg>
      </TaskSlot>
      <TaskSlot>
        <svg width="22" height="19" viewBox="0 0 22 19">
          <path d="M0 1 H8 L10 3 H22 V19 H0 Z" fill="#f3d67c" />
          <rect x="0" y="4" width="22" height="1" fill="#e8b93c" />
          <path d="M6 18 V12 H9 V10 H13 V12 H16 V18 Z" fill="#2f8fd8" />
        </svg>
      </TaskSlot>
      <TaskSlot>
        <svg width="23" height="23" viewBox="0 0 23 23">
          <path d="M1 6 H22 V22 H1 Z" fill="#fff" />
          <path d="M7.5 8 V4 C7.5 0.5 15.5 0.5 15.5 4 V8" fill="none" stroke="#fff" strokeWidth="1.2" />
          <rect x="6" y="9" width="5" height="5" fill="#f25022" />
          <rect x="12" y="9" width="5" height="5" fill="#7fba00" />
          <rect x="6" y="15" width="5" height="5" fill="#00a4ef" />
          <rect x="12" y="15" width="5" height="5" fill="#ffb900" />
        </svg>
      </TaskSlot>
      <TaskSlot>
        <svg width="23" height="25" viewBox="0 0 23 25">
          <ellipse cx="11.5" cy="12.5" rx="11.5" ry="12.5" fill="#d4141f" />
          <ellipse cx="11.5" cy="12.5" rx="5.2" ry="9" fill="#0a0a0a" />
        </svg>
        <div className="absolute bottom-0 left-[4px] w-[40px] h-[2px] bg-[#ffccb0]" />
      </TaskSlot>
      <TaskSlot>
        <svg width="22" height="17" viewBox="0 0 22 17">
          <rect width="22" height="17" fill="#1c4f7a" />
          <rect x="1.5" y="1.5" width="19" height="14" fill="#6fb8ee" />
          <circle cx="7" cy="6.5" r="3.4" fill="#fff" />
          <path d="M7 6.5 V3 A3.5 3.5 0 0 1 10.4 6.5 Z" fill="#f0a020" />
          <path d="M13 4 H19 M13 7 H19 M3 12.5 H19" stroke="#fff" />
        </svg>
      </TaskSlot>
      <TaskSlot>
        <svg width="24" height="19" viewBox="0 0 24 19">
          <polygon points="12,0 24,6.5 24,19 0,19 0,6.5" fill="#fff" />
          <polygon points="2,8.5 24,7 24,14 12,11" fill="#111" />
        </svg>
      </TaskSlot>
      <TaskSlot className="mt-[7px] !h-[33px] bg-[#3c3c3c]">
        <svg width="24" height="24" viewBox="0 0 24 24" className="-mt-[7px]">
          <path d="M1 11 L9 23 M9 11 L1 23" stroke="#5c9a3c" strokeWidth="3.2" />
          <polygon points="18,0 11,10 16,10 12,18 23,7 18,7 22,0" fill="#5c9a3c" />
        </svg>
        <div className="absolute bottom-0 left-0 w-full h-[2px] bg-[#ffccb0]" />
      </TaskSlot>
      <div className="w-[595px] shrink-0" />
      <div className="w-[24px] h-full flex items-center justify-center shrink-0">
        <div className="w-[20px] h-[20px] rounded-full bg-white flex items-center justify-center">
          <div className="w-[17px] h-[17px] rounded-full bg-[#0f8ed8] flex items-center justify-center text-[13px] leading-none font-bold">?</div>
        </div>
      </div>
      <div className="w-[36px] flex justify-center shrink-0">
        <svg width="12" height="7" viewBox="0 0 12 7"><path d="M0.5 6.5 L6 1 L11.5 6.5" stroke="#fff" fill="none" /></svg>
      </div>
      <div className="w-[12px] flex justify-center shrink-0 overflow-visible">
        <svg width="16" height="12" viewBox="0 0 16 12" className="shrink-0">
          <rect x="5" y="2.5" width="10" height="7" fill="#fff" />
          <path d="M0 5 H4 M1 3 V1 M3 3 V1 M2 7 V11" stroke="#fff" />
        </svg>
      </div>
      <div className="w-[38px] flex justify-center shrink-0">
        <svg width="13" height="13" viewBox="0 0 13 13">
          <circle cx="10.5" cy="10.5" r="1.5" fill="#fff" />
          <path d="M0.5 12.5 C0.5 6 6 0.5 12.5 0.5 M3 12.5 C3 7.5 7.5 3 12.5 3 M5.5 12.5 C5.5 9 9 5.5 12.5 5.5" stroke="#ccc" fill="none" strokeDasharray="1.4 0.6" />
        </svg>
      </div>
      <div className="w-[8px] flex justify-center shrink-0 overflow-visible">
        <svg width="16" height="12" viewBox="0 0 16 12" className="shrink-0">
          <path d="M0.5 4 H3.5 L6.5 1 V11 L3.5 8 H0.5 Z M9 4 C10 5 10 7 9 8 M11.5 2.5 C13 4.5 13 7.5 11.5 9.5 M13.5 1 C15.7 4 15.7 8 13.5 11" stroke="#fff" fill="none" />
        </svg>
      </div>
      <div className="w-[52px] text-center text-[12px] shrink-0">РУС</div>
      <div className="w-[64px] -mx-[8px] shrink-0 text-center text-[12px] leading-[18px] whitespace-nowrap">
        <div>11:55</div>
        <div>26.01.2018</div>
      </div>
      <div className="w-[58px] h-full shrink-0 flex items-center justify-end pr-[10px] relative">
        <svg width="16" height="15" viewBox="0 0 16 15" className="-mt-[6px] -mr-[3px]">
          <path d="M0 0 H16 V11 H7 L4 14 V11 H0 Z" fill="#fff" />
          <path d="M3 3.5 H13 M3 6 H13 M3 8.5 H10" stroke="#555" />
        </svg>
        <div className="absolute right-[3px] bottom-[5px] w-[16px] h-[16px] rounded-full bg-[#444] border border-black flex items-center justify-center text-[10px] leading-none font-bold">1</div>
      </div>
      <div className="w-px h-full bg-[#4a4a4a] shrink-0" />
    </div>
  );
}

export default function App() {
  return (
    <div className="relative w-[1366px] h-[768px] overflow-hidden bg-black">
      <Browser />
      <MtWindow />
      <Taskbar />
    </div>
  );
}
